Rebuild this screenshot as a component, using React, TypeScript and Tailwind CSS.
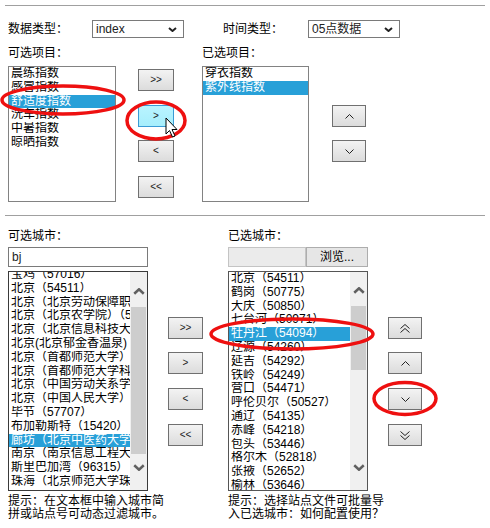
import React from 'react';

const topItems = ['晨练指数', '感冒指数', '舒适度指数', '洗车指数', '中暑指数', '晾晒指数'];
const chosenItems = ['穿衣指数', '紫外线指数'];

const cityItems = [
  '宝鸡（57016）',
  '北京（54511）',
  '北京（北京劳动保障职业学院）',
  '北京（北京农学院）（54399）',
  '北京（北京信息科技大学）',
  '北京(北京郁金香温泉)',
  '北京（首都师范大学）',
  '北京（首都师范大学科德学院）',
  '北京（中国劳动关系学院）',
  '北京（中国人民大学）',
  '毕节（57707）',
  '布加勒斯特（15420）',
  '廊坊（北京中医药大学东方学院）',
  '南京（南京信息工程大学）',
  '斯里巴加湾（96315）',
  '珠海（北京师范大学珠海分校）',
];

const chosenCities = [
  '北京（54511）',
  '鹤岗（50775）',
  '大庆（50850）',
  '七台河（50971）',
  '牡丹江（54094）',
  '辽源（54260）',
  '延吉（54292）',
  '铁岭（54249）',
  '营口（54471）',
  '呼伦贝尔（50527）',
  '通辽（54135）',
  '赤峰（54218）',
  '包头（53446）',
  '格尔木（52818）',
  '张掖（52652）',
  '榆林（53646）',
];

function Chevron({
  up = false,
  double = false,
  w,
  h,
  sw,
  color,
}: {
  up?: boolean;
  double?: boolean;
  w: number;
  h: number;
  sw: number;
  color: string;
}) {
  const total = double ? h + 4 : h;
  const line = (dy: number) => {
    const top = sw / 2 + dy;
    const bot = h - sw / 2 + dy;
    return up
      ? `${sw / 2},${bot} ${w / 2},${top} ${w - sw / 2},${bot}`
      : `${sw / 2},${top} ${w / 2},${bot} ${w - sw / 2},${top}`;
  };
  return (
    <svg width={w} height={total} viewBox={`0 0 ${w} ${total}`}>
      <polyline points={line(0)} fill="none" stroke={color} strokeWidth={sw} />
      {double && <polyline points={line(4)} fill="none" stroke={color} strokeWidth={sw} />}
    </svg>
  );
}

function Btn({
  children,
  className = '',
  hover = false,
}: {
  children: React.ReactNode;
  className?: string;
  hover?: boolean;
}) {
  return (
    <div
      className={`flex h-[22px] items-center justify-center border text-[10px] leading-none text-[#222] ${
        hover
          ? 'border-[#3a9bd5] bg-linear-to-b from-[#b9f4ff] to-[#a6eefc]'
          : 'border-[#707070] bg-linear-to-b from-[#f3f3f3] to-[#dcdcdc]'
      } ${className}`}
    >
      {children}
    </div>
  );
}

function Select({ value, className = '' }: { value: string; className?: string }) {
  return (
    <div
      className={`flex h-[18px] items-center justify-between border border-[#7a7a7a] bg-white pl-[3px] pr-[6px] text-[12px] text-[#222] ${className}`}
    >
      <span className="leading-none">{value}</span>
      <Chevron w={9} h={5} sw={2} color="#222" />
    </div>
  );
}

function Row({ text, selected }: { text: string; selected?: boolean }) {
  return (
    <div
      className={`h-[13.8px] overflow-hidden whitespace-nowrap pl-[2px] leading-[13.8px] ${
        selected ? 'bg-[#28a0d8] text-white' : ''
      }`}
    >
      {text}
    </div>
  );
}

function ScrollBar({ thumbTop, thumbH }: { thumbTop: number; thumbH: number }) {
  return (
    <div className="flex h-full w-[17px] shrink-0 flex-col bg-[#f0f0f0]">
      <div className="flex justify-center" style={{ height: thumbTop, paddingTop: thumbTop - 19 }}>
        <Chevron up w={12} h={7} sw={2.5} color="#606060" />
      </div>
      <div className="mx-[1px] bg-[#cdcdcd]" style={{ height: thumbH }} />
      <div className="flex-1" />
      <div className="flex h-[34px] justify-center pt-[8px]">
        <Chevron w={12} h={7} sw={2.5} color="#606060" />
      </div>
    </div>
  );
}

export default function App() {
  return (
    <div className="relative h-[528px] w-[490px] overflow-hidden bg-white font-['Liberation_Sans','Noto_Sans_CJK_SC',sans-serif] text-[12px] text-black">
      <div className="px-[5px] pt-[5px]">
        <div className="h-px bg-[#a0a0a0]" />
      </div>

      {/* type selects */}
      <div className="mt-[14px] flex h-[18px] items-center pl-[8px]">
        <span className="w-[84px]">数据类型：</span>
        <Select value="index" className="w-[92px]" />
        <span className="ml-[39px] w-[85px]">时间类型：</span>
        <Select value="05点数据" className="w-[92px]" />
      </div>

      <div className="mt-[8px] flex h-[14px] items-center pl-[8px] leading-[14px]">
        <span className="w-[194px]">可选项目：</span>
        <span>已选项目：</span>
      </div>

      {/* items */}
      <div className="mt-[6px] flex h-[136px] pl-[8px]">
        <div className="h-full w-[108px] overflow-hidden border border-[#828282] bg-white">
          {topItems.map((t) => (
            <Row key={t} text={t} selected={t === '舒适度指数'} />
          ))}
        </div>
        <div className="ml-[22px] flex w-[36px] flex-col">
          <Btn className="mt-[3px]">&gt;&gt;</Btn>
          <Btn hover className="mt-[14px]">&gt;</Btn>
          <Btn className="mt-[13px]">&lt;</Btn>
          <Btn className="mt-[14px]">&lt;&lt;</Btn>
        </div>
        <div className="ml-[28px] h-full w-[107px] overflow-hidden border border-[#828282] bg-white">
          {chosenItems.map((t) => (
            <Row key={t} text={t} selected={t === '紫外线指数'} />
          ))}
        </div>
        <div className="ml-[23px] flex w-[34px] flex-col">
          <Btn className="mt-[39px]">
            <Chevron up w={9} h={5} sw={1} color="#222" />
          </Btn>
          <Btn className="mt-[13px]">
            <Chevron w={9} h={5} sw={1} color="#222" />
          </Btn>
        </div>
      </div>

      <div className="mt-[13px] px-[5px]">
        <div className="h-px bg-[#a0a0a0]" />
      </div>

      {/* cities */}
      <div className="mt-[13px] flex h-[14px] items-center pl-[8px] leading-[14px]">
        <span className="w-[220px]">可选城市：</span>
        <span>已选城市：</span>
      </div>

      <div className="mt-[4px] flex h-[20px] pl-[8px]">
        <div className="flex h-full w-[140px] items-center border border-[#7a7a7a] bg-white pl-[3px] text-[12px] text-[#222]">
          bj
        </div>
        <div className="ml-[80px] h-full w-[78px] border border-[#c4c4c4] bg-[#ebebeb]" />
        <div className="flex h-full w-[62px] items-center justify-center border border-[#adadad] bg-[#e6e6e6] text-[12px]">
          浏览...
        </div>
      </div>

      <div className="mt-[4px] flex h-[220px] pl-[8px]">
        <div className="flex h-full w-[140px] border border-[#3a3a3a] bg-white">
          <div className="min-w-0 flex-1 overflow-hidden">
            <div className="mt-[-4px]">
              {cityItems.map((t) => (
                <Row key={t} text={t} selected={t.startsWith('廊坊')} />
              ))}
            </div>
          </div>
          <ScrollBar thumbTop={35} thumbH={147} />
        </div>
        <div className="ml-[20px] flex w-[35px] flex-col">
          <Btn className="mt-[46px]">&gt;&gt;</Btn>
          <Btn className="mt-[13px]">&gt;</Btn>
          <Btn className="mt-[14px]">&lt;</Btn>
          <Btn className="mt-[14px]">&lt;&lt;</Btn>
        </div>
        <div className="ml-[25px] flex h-full w-[140px] border border-[#555] bg-white">
          <div className="min-w-0 flex-1 overflow-hidden">
            {chosenCities.map((t) => (
              <Row key={t} text={t} selected={t.startsWith('牡丹江')} />
            ))}
          </div>
          <ScrollBar thumbTop={34} thumbH={64} />
        </div>
        <div className="ml-[20px] flex w-[34px] flex-col">
          <Btn className="mt-[46px]">
            <Chevron up double w={10} h={5} sw={1} color="#222" />
          </Btn>
          <Btn className="mt-[13px]">
            <Chevron up w={9} h={5} sw={1} color="#222" />
          </Btn>
          <Btn className="mt-[14px]">
            <Chevron w={9} h={5} sw={1} color="#222" />
          </Btn>
          <Btn className="mt-[14px]">
            <Chevron double w={10} h={5} sw={1} color="#222" />
          </Btn>
        </div>
      </div>

      <div className="mt-[4px] flex pl-[8px] text-[12px] leading-[13px]">
        <p className="w-[220px] whitespace-nowrap">
          提示：在文本框中输入城市简
          <br />
          拼或站点号可动态过滤城市。
        </p>
        <p className="whitespace-nowrap">
          提示：选择站点文件可批量导
          <br />
          入已选城市：如何配置使用？
        </p>
      </div>

      {/* annotations drawn over the screenshot */}
      <svg className="pointer-events-none absolute left-0 top-0" width={490} height={528}>
        <g fill="none" stroke="#ee1010" strokeWidth={3.5}>
          <ellipse cx={63} cy={100} rx={61} ry={14} />
          <ellipse cx={156} cy={120.5} rx={29} ry={18.5} />
          <ellipse cx={292} cy={334} rx={81} ry={15} />
          <ellipse cx={405} cy={398.5} rx={31} ry={16} />
        </g>
        <path
          d="M166 118 L166 134 L169.5 130.5 L172.5 137 L175 136 L172 129.5 L177 129.5 Z"
          fill="#fff"
          stroke="#000"
          strokeWidth={1}
          strokeLinejoin="round"
        />
      </svg>
    </div>
  );
}
